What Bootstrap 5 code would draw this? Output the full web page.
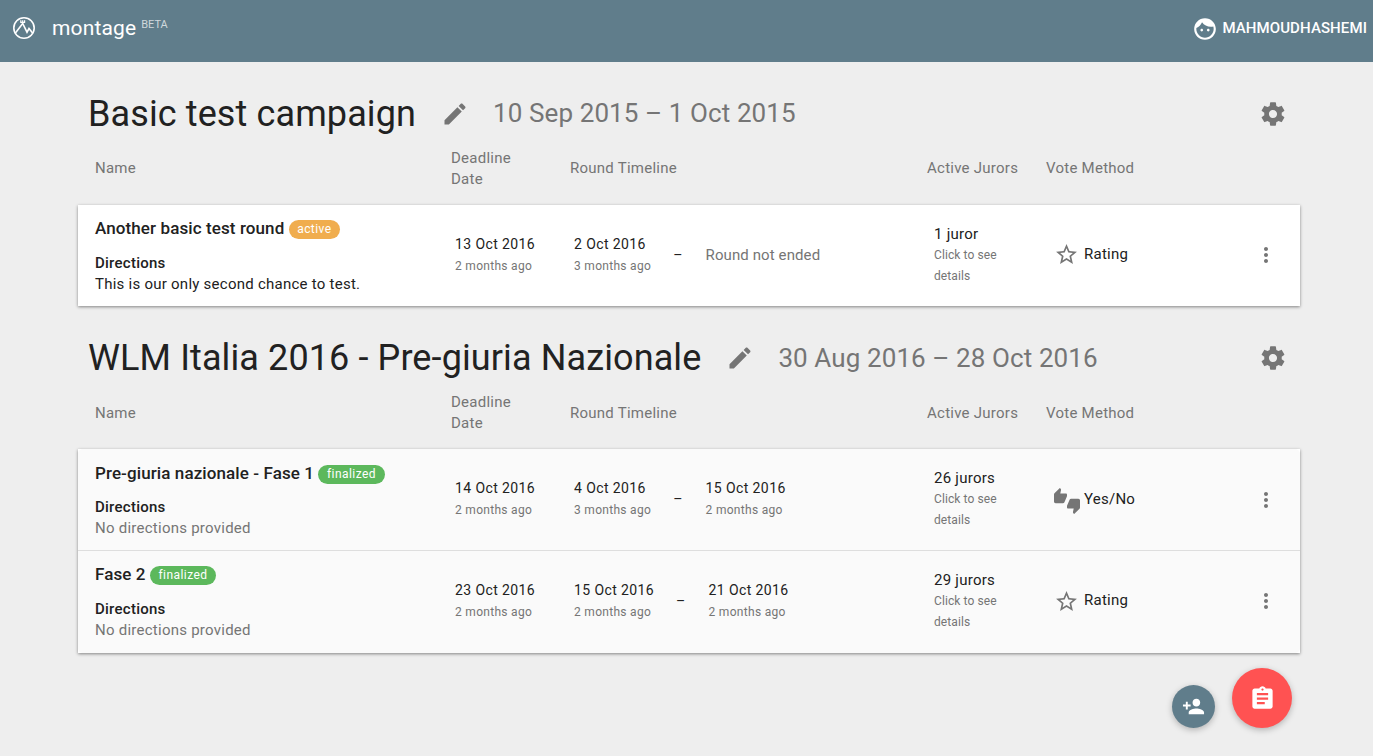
<!DOCTYPE html>
<html lang="en">
<head>
  <meta charset="UTF-8" />
  <title>Montage - Campaigns</title>
  <link rel="stylesheet" href="https://cdn.jsdelivr.net/npm/bootstrap@5.3.0/dist/css/bootstrap.min.css" />
  <style>
    body { background: #eeeeee; color: #212121; font-family: Roboto, "Liberation Sans", sans-serif; font-size: 15px; letter-spacing: .25px; line-height: 21px; }
    svg { fill: currentColor; display: block; flex: none; }
    .top-bar { background: #607d8b; height: 62px; padding: 0 6px 6px 12px; color: #fff; }
    .brand-name { font-size: 21px; letter-spacing: .15px; margin-left: 16px; }
    .brand-tag { font-size: 11px; color: #cfd8dc; margin-left: 5px; margin-bottom: 8px; letter-spacing: 0; }
    .user-icon { margin-top: 2px; }
    .user-name { font-weight: 500; margin-left: 4px; letter-spacing: .1px; }
    .campaigns { padding: 26.5px 73px 0 78px; }
    .campaign-head { height: 50px; padding-left: 10px; padding-right: 13px; margin-bottom: 9px; color: #757575; }
    .campaign-name { font-size: 36px; color: #212121; margin: 0; font-weight: 400; line-height: 50px; letter-spacing: .11px; }
    .edit-icon { margin: 0 24px 0 25px; }
    .campaign-dates { font-size: 26px; letter-spacing: .1px; }
    .round-grid { display: grid; grid-template-columns: 360px 119px 360px 122px 198px 24px; }
    .labels-row { display: grid; grid-template-columns: 356px 119px 357px 119px auto; justify-content: start; color: #757575; padding-left: 17px; height: 42px; margin-bottom: 15.5px; align-items: center; }
    .labels-tight { margin-bottom: 15px; }
    .labels-row .deadline-label { width: 70px; }
    .rounds-card { border: 0; border-radius: 0; box-shadow: 0 1px 3px rgba(0,0,0,.45); margin-bottom: 27px; }
    .rounds-card .list-group-item { padding: 11px 0 11px 17px; height: 101px; align-items: center; border-color: #dedede; color: #212121; }
    .rounds-card .list-group-item:last-child { padding-bottom: 12px; }
    .rounds-muted .list-group-item { background: #fafafa; height: 102px; }
    .round-name { font-size: 17px; font-weight: 500; line-height: 24px; margin-bottom: 12px; letter-spacing: .1px; }
    .name-high { margin-top: -1px; margin-bottom: 13px; }
    .text-low { margin-top: 1px; margin-bottom: -1px; }
    .state-pill { font-size: 12px; font-weight: 400; color: #fff; border-radius: 10px; padding: 0 8.5px; line-height: 19px; display: inline-block; letter-spacing: .45px; vertical-align: 1px; }
    .state-active { background: #f0ad4e; }
    .state-final { background: #5cb85c; }
    .strong-label { font-weight: 500; }
    .grey-text { color: #757575; }
    .end-note { letter-spacing: .1px; }
    .date-cell { font-size: 14px; letter-spacing: .4px; }
    .tiny-text { font-size: 12px; color: #757575; line-height: 22px; letter-spacing: .3px; }
    .juror-note { font-size: 12px; color: #757575; width: 80px; line-height: 21px; letter-spacing: .1px; }
    .time-gap { margin: 0 23px 0 22px; font-size: 14px; }
    .rating-cell { margin-bottom: 2px; }
    .star-icon { color: #757575; margin: 1px 5px 0 -2px; }
    .thumbs-icon { color: #757575; margin: 2px 4px 0 -2px; }
    .menu-icon { color: #757575; }
    .rounds-muted .list-group-item:last-child .menu-icon { margin-bottom: 1px; }
    .fab-big, .fab-small { position: fixed; display: flex; align-items: center; justify-content: center; border: 0; padding: 0; border-radius: 50%; color: #fff; box-shadow: 0 2px 6px rgba(0,0,0,.25); }
    .fab-big { width: 60px; height: 60px; background: #ff5252; right: 81px; bottom: 28px; }
    .fab-small { width: 43px; height: 43px; background: #607d8b; right: 158px; bottom: 28px; }
  </style>
</head>
<body>
  <div class="top-bar d-flex align-items-center">
    <svg width="24" height="24" viewBox="0 0 24 24" style="fill:none" stroke="#fff" stroke-width="1.6"><circle cx="12" cy="12" r="10.2"/><path d="M3 17.5 10.7 7.5 15 16.2 17 12.5 21 17.5"/><path d="M8.8 4.2v2.2h3.8V4.2M10.7 4.2v3" stroke-width="1.2"/></svg>
    <span class="brand-name">montage</span>
    <span class="brand-tag">BETA</span>
    <div class="ms-auto d-flex align-items-center">
      <svg class="user-icon" width="26" height="26" viewBox="0 0 24 24"><path d="M9 11.75c-.69 0-1.25.56-1.25 1.25s.56 1.25 1.25 1.25 1.25-.56 1.25-1.25-.56-1.25-1.25-1.25zm6 0c-.69 0-1.25.56-1.25 1.25s.56 1.25 1.25 1.25 1.25-.56 1.25-1.25-.56-1.25-1.25-1.25zM12 2C6.48 2 2 6.48 2 12s4.48 10 10 10 10-4.48 10-10S17.52 2 12 2zm0 18c-4.41 0-8-3.59-8-8 0-.29.02-.58.05-.86 2.36-1.05 4.23-2.98 5.21-5.37C11.07 8.33 14.05 10 17.42 10c.78 0 1.53-.09 2.25-.26.21.71.33 1.47.33 2.26 0 4.41-3.59 8-8 8z"/></svg>
      <span class="user-name">MAHMOUDHASHEMI</span>
    </div>
  </div>

  <div class="campaigns">
    <div class="campaign-head d-flex align-items-center">
      <h1 class="campaign-name">Basic test campaign</h1>
      <svg class="edit-icon" width="28" height="28" viewBox="0 0 24 24"><path d="M3 17.25V21h3.75L17.81 9.94l-3.75-3.75L3 17.25zM20.71 7.04c.39-.39.39-1.02 0-1.41l-2.34-2.34c-.39-.39-1.02-.39-1.41 0l-1.83 1.83 3.75 3.75 1.83-1.83z"/></svg>
      <span class="campaign-dates">10 Sep 2015 – 1 Oct 2015</span>
      <svg class="ms-auto" width="28" height="28" viewBox="0 0 24 24"><path d="M19.43 12.98c.04-.32.07-.64.07-.98s-.03-.66-.07-.98l2.11-1.65c.19-.15.24-.42.12-.64l-2-3.46c-.12-.22-.39-.3-.61-.22l-2.49 1c-.52-.4-1.08-.73-1.69-.98l-.38-2.65C14.46 2.18 14.25 2 14 2h-4c-.25 0-.46.18-.49.42l-.38 2.65c-.61.25-1.17.59-1.69.98l-2.49-1c-.23-.09-.49 0-.61.22l-2 3.46c-.13.22-.07.49.12.64l2.11 1.65c-.04.32-.07.65-.07.98s.03.66.07.98l-2.11 1.65c-.19.15-.24.42-.12.64l2 3.46c.12.22.39.3.61.22l2.49-1c.52.4 1.08.73 1.69.98l.38 2.65c.03.24.24.42.49.42h4c.25 0 .46-.18.49-.42l.38-2.65c.61-.25 1.17-.59 1.69-.98l2.49 1c.23.09.49 0 .61-.22l2-3.46c.12-.22.07-.49-.12-.64l-2.11-1.65zM12 15.5c-1.93 0-3.5-1.57-3.5-3.5s1.57-3.5 3.5-3.5 3.5 1.57 3.5 3.5-1.57 3.5-3.5 3.5z"/></svg>
    </div>
    <div class="labels-row">
      <div>Name</div>
      <div class="deadline-label">Deadline Date</div>
      <div>Round Timeline</div>
      <div>Active Jurors</div>
      <div>Vote Method</div>
    </div>
    <div class="card rounds-card">
      <div class="list-group list-group-flush">
        <div class="list-group-item round-grid">
          <div>
            <div class="round-name name-high">Another basic test round <span class="state-pill state-active">active</span></div>
            <div class="strong-label text-low">Directions</div>
            <div class="text-low">This is our only second chance to test.</div>
          </div>
          <div class="date-cell">13 Oct 2016<div class="tiny-text">2 months ago</div></div>
          <div class="d-flex align-items-center">
            <div class="date-cell">2 Oct 2016<div class="tiny-text">3 months ago</div></div>
            <span class="time-gap">–</span>
            <span class="grey-text end-note">Round not ended</span>
          </div>
          <div>1 juror<div class="juror-note">Click to see details</div></div>
          <div class="rating-cell d-flex align-items-center">
            <svg class="star-icon" width="25" height="25" viewBox="0 0 24 24"><path d="M22 9.24l-7.19-.62L12 2 9.19 8.63 2 9.24l5.46 4.73L5.82 21 12 17.27 18.18 21l-1.63-7.03L22 9.24zM12 15.4l-3.76 2.27 1-4.28-3.32-2.88 4.38-.38L12 6.1l1.71 4.04 4.38.38-3.32 2.88 1 4.28L12 15.4z"/></svg>
            Rating
          </div>
          <svg class="menu-icon" width="24" height="24" viewBox="0 0 24 24"><path d="M12 8c1.1 0 2-.9 2-2s-.9-2-2-2-2 .9-2 2 .9 2 2 2zm0 2c-1.1 0-2 .9-2 2s.9 2 2 2 2-.9 2-2-.9-2-2-2zm0 6c-1.1 0-2 .9-2 2s.9 2 2 2 2-.9 2-2-.9-2-2-2z"/></svg>
        </div>
      </div>
    </div>

    <div class="campaign-head d-flex align-items-center">
      <h1 class="campaign-name">WLM Italia 2016 - Pre-giuria Nazionale</h1>
      <svg class="edit-icon" width="28" height="28" viewBox="0 0 24 24"><path d="M3 17.25V21h3.75L17.81 9.94l-3.75-3.75L3 17.25zM20.71 7.04c.39-.39.39-1.02 0-1.41l-2.34-2.34c-.39-.39-1.02-.39-1.41 0l-1.83 1.83 3.75 3.75 1.83-1.83z"/></svg>
      <span class="campaign-dates">30 Aug 2016 – 28 Oct 2016</span>
      <svg class="ms-auto" width="28" height="28" viewBox="0 0 24 24"><path d="M19.43 12.98c.04-.32.07-.64.07-.98s-.03-.66-.07-.98l2.11-1.65c.19-.15.24-.42.12-.64l-2-3.46c-.12-.22-.39-.3-.61-.22l-2.49 1c-.52-.4-1.08-.73-1.69-.98l-.38-2.65C14.46 2.18 14.25 2 14 2h-4c-.25 0-.46.18-.49.42l-.38 2.65c-.61.25-1.17.59-1.69.98l-2.49-1c-.23-.09-.49 0-.61.22l-2 3.46c-.13.22-.07.49.12.64l2.11 1.65c-.04.32-.07.65-.07.98s.03.66.07.98l-2.11 1.65c-.19.15-.24.42-.12.64l2 3.46c.12.22.39.3.61.22l2.49-1c.52.4 1.08.73 1.69.98l.38 2.65c.03.24.24.42.49.42h4c.25 0 .46-.18.49-.42l.38-2.65c.61-.25 1.17-.59 1.69-.98l2.49 1c.23.09.49 0 .61-.22l2-3.46c.12-.22.07-.49-.12-.64l-2.11-1.65zM12 15.5c-1.93 0-3.5-1.57-3.5-3.5s1.57-3.5 3.5-3.5 3.5 1.57 3.5 3.5-1.57 3.5-3.5 3.5z"/></svg>
    </div>
    <div class="labels-row labels-tight">
      <div>Name</div>
      <div class="deadline-label">Deadline Date</div>
      <div>Round Timeline</div>
      <div>Active Jurors</div>
      <div>Vote Method</div>
    </div>
    <div class="card rounds-card rounds-muted">
      <div class="list-group list-group-flush">
        <div class="list-group-item round-grid">
          <div>
            <div class="round-name">Pre-giuria nazionale - Fase 1 <span class="state-pill state-final">finalized</span></div>
            <div class="strong-label">Directions</div>
            <div class="grey-text">No directions provided</div>
          </div>
          <div class="date-cell">14 Oct 2016<div class="tiny-text">2 months ago</div></div>
          <div class="d-flex align-items-center">
            <div class="date-cell">4 Oct 2016<div class="tiny-text">3 months ago</div></div>
            <span class="time-gap">–</span>
            <div class="date-cell">15 Oct 2016<div class="tiny-text">2 months ago</div></div>
          </div>
          <div>26 jurors<div class="juror-note">Click to see details</div></div>
          <div class="d-flex align-items-center">
            <svg class="thumbs-icon" width="26" height="26" viewBox="0 0 24 24"><path d="M12 6c0-.55-.45-1-1-1H5.82l.66-3.18.02-.23c0-.31-.13-.59-.33-.8L5.38 0 .44 4.94C.17 5.21 0 5.59 0 6v6.5c0 .83.67 1.5 1.5 1.5h6.75c.62 0 1.15-.38 1.38-.91l2.26-5.29c.07-.17.11-.36.11-.55V6zm10.5 4h-6.75c-.62 0-1.15.38-1.38.91l-2.26 5.29c-.07.17-.11.36-.11.55V18c0 .55.45 1 1 1h5.18l-.66 3.18-.02.24c0 .31.13.59.33.8l.79.78 4.94-4.94c.27-.27.44-.65.44-1.06v-6.5c0-.83-.67-1.5-1.5-1.5z"/></svg>
            Yes/No
          </div>
          <svg class="menu-icon" width="24" height="24" viewBox="0 0 24 24"><path d="M12 8c1.1 0 2-.9 2-2s-.9-2-2-2-2 .9-2 2 .9 2 2 2zm0 2c-1.1 0-2 .9-2 2s.9 2 2 2 2-.9 2-2-.9-2-2-2zm0 6c-1.1 0-2 .9-2 2s.9 2 2 2 2-.9 2-2-.9-2-2-2z"/></svg>
        </div>
        <div class="list-group-item round-grid">
          <div>
            <div class="round-name name-high">Fase 2 <span class="state-pill state-final">finalized</span></div>
            <div class="strong-label">Directions</div>
            <div class="grey-text">No directions provided</div>
          </div>
          <div class="date-cell">23 Oct 2016<div class="tiny-text">2 months ago</div></div>
          <div class="d-flex align-items-center">
            <div class="date-cell">15 Oct 2016<div class="tiny-text">2 months ago</div></div>
            <span class="time-gap">–</span>
            <div class="date-cell">21 Oct 2016<div class="tiny-text">2 months ago</div></div>
          </div>
          <div>29 jurors<div class="juror-note">Click to see details</div></div>
          <div class="rating-cell d-flex align-items-center">
            <svg class="star-icon" width="25" height="25" viewBox="0 0 24 24"><path d="M22 9.24l-7.19-.62L12 2 9.19 8.63 2 9.24l5.46 4.73L5.82 21 12 17.27 18.18 21l-1.63-7.03L22 9.24zM12 15.4l-3.76 2.27 1-4.28-3.32-2.88 4.38-.38L12 6.1l1.71 4.04 4.38.38-3.32 2.88 1 4.28L12 15.4z"/></svg>
            Rating
          </div>
          <svg class="menu-icon" width="24" height="24" viewBox="0 0 24 24"><path d="M12 8c1.1 0 2-.9 2-2s-.9-2-2-2-2 .9-2 2 .9 2 2 2zm0 2c-1.1 0-2 .9-2 2s.9 2 2 2 2-.9 2-2-.9-2-2-2zm0 6c-1.1 0-2 .9-2 2s.9 2 2 2 2-.9 2-2-.9-2-2-2z"/></svg>
        </div>
      </div>
    </div>
  </div>

  <button class="fab-small" aria-label="Add organizer"><svg width="23" height="23" viewBox="0 0 24 24"><path d="M15 12c2.21 0 4-1.79 4-4s-1.79-4-4-4-4 1.79-4 4 1.79 4 4 4zm-9-2V7H4v3H1v2h3v3h2v-3h3v-2H6zm9 4c-2.67 0-8 1.34-8 4v2h16v-2c0-2.66-5.33-4-8-4z"/></svg></button>
  <button class="fab-big" aria-label="Add campaign"><svg width="27" height="27" viewBox="0 0 24 24"><path d="M19 3h-4.18C14.4 1.84 13.3 1 12 1c-1.3 0-2.4.84-2.82 2H5c-1.1 0-2 .9-2 2v14c0 1.1.9 2 2 2h14c1.1 0 2-.9 2-2V5c0-1.1-.9-2-2-2zm-7 0c.55 0 1 .45 1 1s-.45 1-1 1-1-.45-1-1 .45-1 1-1zm2 14H7v-2h7v2zm3-4H7v-2h10v2zm0-4H7V7h10v2z"/></svg></button>

  <script src="https://cdn.jsdelivr.net/npm/bootstrap@5.3.0/dist/js/bootstrap.bundle.min.js"></script>
</body>
</html>
